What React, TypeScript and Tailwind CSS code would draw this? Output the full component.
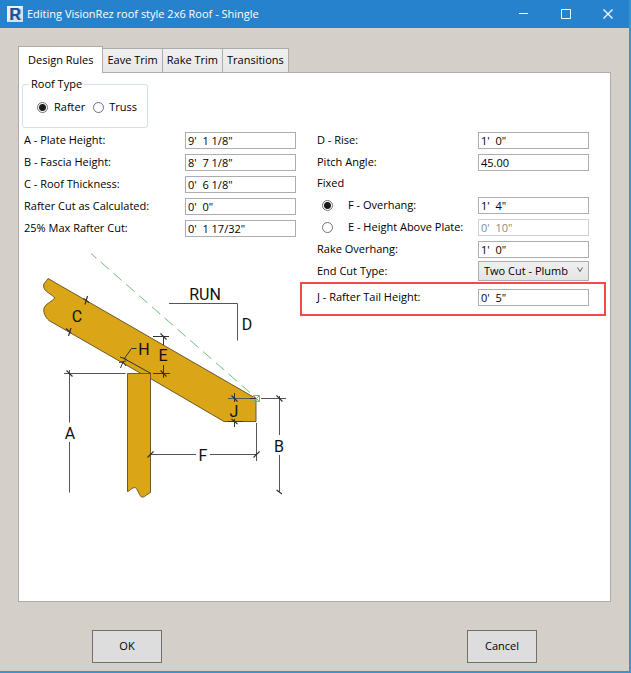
import { useState } from 'react'
import type { ReactNode } from 'react'
import { clsx } from 'clsx'

const TABS = ['Design Rules', 'Eave Trim', 'Rake Trim', 'Transitions']

const LEFT_FIELDS = [
  { id: 'plate-height', label: 'A - Plate Height:', value: `9'  1 1/8"` },
  { id: 'fascia-height', label: 'B - Fascia Height:', value: `8'  7 1/8"` },
  { id: 'roof-thickness', label: 'C - Roof Thickness:', value: `0'  6 1/8"` },
  { id: 'rafter-cut', label: 'Rafter Cut as Calculated:', value: `0'  0"` },
  { id: 'max-rafter-cut', label: '25% Max Rafter Cut:', value: `0'  1 17/32"` },
]

interface RadioProps {
  id: string
  name: string
  checked: boolean
  onChange: () => void
}

function Radio({ id, name, checked, onChange }: RadioProps) {
  return (
    <input
      id={id}
      type="radio"
      name={name}
      checked={checked}
      onChange={onChange}
      className="h-[11px] w-[11px] shrink-0 appearance-none rounded-full border border-[#707070] bg-white checked:bg-[radial-gradient(circle,#1a1a1a_0_3px,white_4px)]"
    />
  )
}

interface TextFieldProps {
  id: string
  value: string
  label?: string
  disabled?: boolean
}

function TextField({ id, value, label, disabled }: TextFieldProps) {
  return (
    <input
      id={id}
      type="text"
      aria-label={label}
      defaultValue={value}
      disabled={disabled}
      className="h-[17px] w-[111px] shrink-0 border border-[#abadb3] bg-white px-[2px] text-black disabled:border-[#d0d1d4] disabled:text-[#8a8a8a]"
    />
  )
}

function Row({ children }: { children: ReactNode }) {
  return <div className="flex h-[22px] items-center">{children}</div>
}

function RoofDiagram() {
  return (
    <svg
      viewBox="24 244 272 262"
      className="block w-[272px]"
      fill="none"
      stroke="#333"
      strokeWidth="1"
      role="img"
      aria-label="Rafter section"
    >
      {/* rafter and wall plate */}
      <g fill="#daa516" stroke="#6b5a28">
        <path d="M48 278.5 L256 398.5 V421.5 H224 L150.5 378.5 V373.5 H141 L49 320.5 C45 317 43 312 44 308 C46 303 52 302 54.7 298 C52 294 44 292 43.5 286 C43.5 283 46 282 48 278.5 Z" />
        <path d="M127.5 373.5 H150.5 V492.5 C147 494 144 498 141.5 497 C138 494 138 488 134.5 487.5 C131 488 130 491 127.5 491.5 Z" />
      </g>

      {/* roof line */}
      <path d="M91 253.5 L255 397" stroke="#6fbf78" strokeDasharray="11 6" strokeDashoffset="4" />
      <path d="M253.5 395.5 H259.5 V401.5 H253.5 Z M253.5 395.5 L259.5 401.5 M259.5 395.5 L253.5 401.5" stroke="#6fbf78" />

      {/* run and rise */}
      <path d="M169 303.5 H237.5 V340.5" stroke="#555" />

      {/* A and B */}
      <path d="M64 373.5 H125.5 M69.5 370 V422.5 M69.5 442 V492.5" stroke="#555" />
      <path d="M228 398.5 H250 M261 398.5 H286 M279.5 396 V435 M279.5 455 V492" stroke="#555" />
      {/* F */}
      <path d="M150.5 454.5 H196 M210 454.5 H256.5 M256.5 423 V461" stroke="#555" />
      {/* E */}
      <path d="M153 336.5 H169 M163.5 336 V345 M163.5 365 V378 M153 373.5 H170" />
      {/* J */}
      <path d="M250 398.5 H256 M234.5 393 V402 M228 421.5 H243 M234.5 419 V427" />
      {/* H leader */}
      <path d="M136.5 348.5 H131.5 L124 359 M123 358 L151 373.5 M120 357 L127 359.5 M123 362 L120.5 368 M123 362 L126 366 M119 362.5 L126 361" />
      {/* ticks */}
      <path
        d="M66.5 370.5 L72.5 376.5 M276.5 395.5 L282.5 401.5 M276.5 490 L282 494 M147.5 457.5 L153.5 451.5 M253.5 457.5 L259.5 451.5 M160.5 333.5 L166.5 339.5 M160.5 370.5 L166.5 376.5 M231.5 395.5 L237.5 401.5 M231.5 419 L237.5 424 M83.5 298.5 L89 302.5 M87.5 296 L85 304.5 M66 328.5 L71 333 M71 328 L68.5 336"
        strokeWidth="1.2"
      />

      <g
        fill="#111"
        stroke="none"
        textAnchor="middle"
        className="font-[Roboto,sans-serif] text-[16px]"
      >
        <text x="205" y="300">RUN</text>
        <text x="247" y="330">D</text>
        <text x="77" y="322">C</text>
        <text x="144" y="355">H</text>
        <text x="163" y="361">E</text>
        <text x="70" y="439">A</text>
        <text x="234" y="417">J</text>
        <text x="203" y="461">F</text>
        <text x="279" y="452">B</text>
      </g>
    </svg>
  )
}

function TitleBar() {
  return (
    <header className="flex h-7 shrink-0 items-center bg-[#2782ce] pl-[7px] text-white">
      <svg viewBox="0 0 16 16" className="h-4 w-4 shrink-0" aria-hidden="true">
        <rect width="16" height="16" fill="#d3e2f0" />
        <path d="M0 16 V0 H16 Z" fill="#e9f1f8" />
        <text x="9" y="14" textAnchor="middle" fill="#7fa9d3" className="font-['Liberation_Sans',sans-serif] text-[16px] font-bold">R</text>
        <text x="8" y="14" textAnchor="middle" fill="#1d4f8f" className="font-['Liberation_Sans',sans-serif] text-[16px] font-bold">R</text>
      </svg>
      <h1 className="min-w-0 flex-1 truncate pl-1">Editing VisionRez roof style 2x6 Roof - Shingle</h1>
      <div className="flex h-full stroke-white">
        <button type="button" aria-label="Minimize" className="flex w-[42px] items-center justify-center">
          <svg viewBox="0 0 10 10" className="h-[10px] w-[10px]" fill="none">
            <path d="M0 4.5 H9" />
          </svg>
        </button>
        <button type="button" aria-label="Maximize" className="flex w-[42px] items-center justify-center">
          <svg viewBox="0 0 10 10" className="h-[10px] w-[10px]" fill="none">
            <path d="M0.5 0.5 H9.5 V9.5 H0.5 Z" />
          </svg>
        </button>
        <button type="button" aria-label="Close" className="flex w-[42px] items-center justify-center">
          <svg viewBox="0 0 10 10" className="h-[10px] w-[10px]" fill="none">
            <path d="M0.5 0.5 L9.5 9.5 M9.5 0.5 L0.5 9.5" strokeWidth="1.2" />
          </svg>
        </button>
      </div>
    </header>
  )
}

function DesignRules() {
  const [roofType, setRoofType] = useState('rafter')
  const [fixed, setFixed] = useState('overhang')

  return (
    <div className="px-[3px] pt-[2px]">
      <fieldset className="h-[53px] w-[126px] rounded-[3px] border border-[#d5dfe5] pl-[14px]">
        <legend className="-ml-2 px-[2px] leading-[18px]">Roof Type</legend>
        <div className="flex h-7 items-center">
          <Radio id="rafter" name="roof-type" checked={roofType === 'rafter'} onChange={() => setRoofType('rafter')} />
          <label htmlFor="rafter" className="pr-2 pl-[6px]">Rafter</label>
          <Radio id="truss" name="roof-type" checked={roofType === 'truss'} onChange={() => setRoofType('truss')} />
          <label htmlFor="truss" className="pl-[5px]">Truss</label>
        </div>
      </fieldset>

      <div className="flex items-start pt-px">
        <div className="w-[278px] shrink-0 pl-[2px]">
          {LEFT_FIELDS.map((field) => (
            <Row key={field.id}>
              <label htmlFor={field.id} className="w-[161px] shrink-0">{field.label}</label>
              <TextField id={field.id} value={field.value} />
            </Row>
          ))}
          <div className="pt-[5px]">
            <RoofDiagram />
          </div>
        </div>

        <div className="shrink-0">
          <div className="px-[17px]">
            <Row>
              <label htmlFor="rise" className="w-[161px]">D - Rise:</label>
              <TextField id="rise" value={`1'  0"`} />
            </Row>
            <Row>
              <label htmlFor="pitch" className="w-[161px]">Pitch Angle:</label>
              <TextField id="pitch" value="45.00" />
            </Row>
            <div className="flex h-[21px] items-center">Fixed</div>
            <Row>
              <div className="flex w-[161px] items-center gap-[15px] pl-[5px]">
                <Radio id="fix-overhang" name="fixed" checked={fixed === 'overhang'} onChange={() => setFixed('overhang')} />
                <label htmlFor="fix-overhang">F - Overhang:</label>
              </div>
              <TextField id="overhang" label="Overhang" value={`1'  4"`} disabled={fixed !== 'overhang'} />
            </Row>
            <Row>
              <div className="flex w-[161px] items-center gap-[15px] pl-[5px]">
                <Radio id="fix-height" name="fixed" checked={fixed === 'height'} onChange={() => setFixed('height')} />
                <label htmlFor="fix-height" className="whitespace-nowrap">E - Height Above Plate:</label>
              </div>
              <TextField id="height-above" label="Height Above Plate" value={`0'  10"`} disabled={fixed !== 'height'} />
            </Row>
            <Row>
              <label htmlFor="rake" className="w-[161px]">Rake Overhang:</label>
              <TextField id="rake" value={`1'  0"`} />
            </Row>
            <Row>
              <label htmlFor="end-cut" className="w-[161px]">End Cut Type:</label>
              <div className="relative">
                <select
                  id="end-cut"
                  className="block h-5 w-[111px] appearance-none border border-[#acacac] bg-linear-to-b from-[#f0f0f0] to-[#e5e5e5] pl-[5px]"
                >
                  <option>Two Cut - Plumb</option>
                </select>
                <svg viewBox="0 0 6 6" className="pointer-events-none absolute top-[6px] right-[6px] h-[6px] w-[6px]" fill="none" stroke="#555">
                  <path d="M0.5 0.5 L3 4.5 L5.5 0.5" />
                </svg>
              </div>
            </Row>
          </div>
          <div className="flex h-[34px] items-center border-2 border-[#f04a4a] px-[15px] pb-1">
            <label htmlFor="tail-height" className="w-[161px]">J - Rafter Tail Height:</label>
            <TextField id="tail-height" value={`0'  5"`} />
          </div>
        </div>
      </div>
    </div>
  )
}

export default function App() {
  const [tab, setTab] = useState(TABS[0])

  return (
    <div className="flex min-h-screen flex-col border-r-2 border-b-2 border-[#3c93d2] bg-[#d4d0c9] font-['Open_Sans',sans-serif] text-[11px] text-black">
      <TitleBar />

      <main className="flex flex-1 flex-col px-[18px] pt-[18px]">
        <div role="tablist" className="flex items-end">
          {TABS.map((name) => (
            <button
              key={name}
              type="button"
              role="tab"
              aria-selected={tab === name}
              onClick={() => setTab(name)}
              className={clsx(
                'border border-b-0 border-[#acacac] whitespace-nowrap',
                tab === name
                  ? 'relative -mb-px h-[27px] bg-white px-[9px]'
                  : '-ml-px h-6 bg-linear-to-b from-[#f0f0f0] to-[#e8e8e8] px-1'
              )}
            >
              {name}
            </button>
          ))}
        </div>
        <section role="tabpanel" aria-label={tab} className="flex-1 border border-[#acacac] bg-white">
          {tab === TABS[0] && <DesignRules />}
        </section>
      </main>

      <footer className="flex justify-between px-[92px] pt-7 pb-2">
        <button type="button" className="h-[33px] w-[70px] border border-[#707070] bg-[#ddd]">OK</button>
        <button type="button" className="h-[33px] w-[70px] border border-[#707070] bg-[#ddd]">Cancel</button>
      </footer>
    </div>
  )
}
